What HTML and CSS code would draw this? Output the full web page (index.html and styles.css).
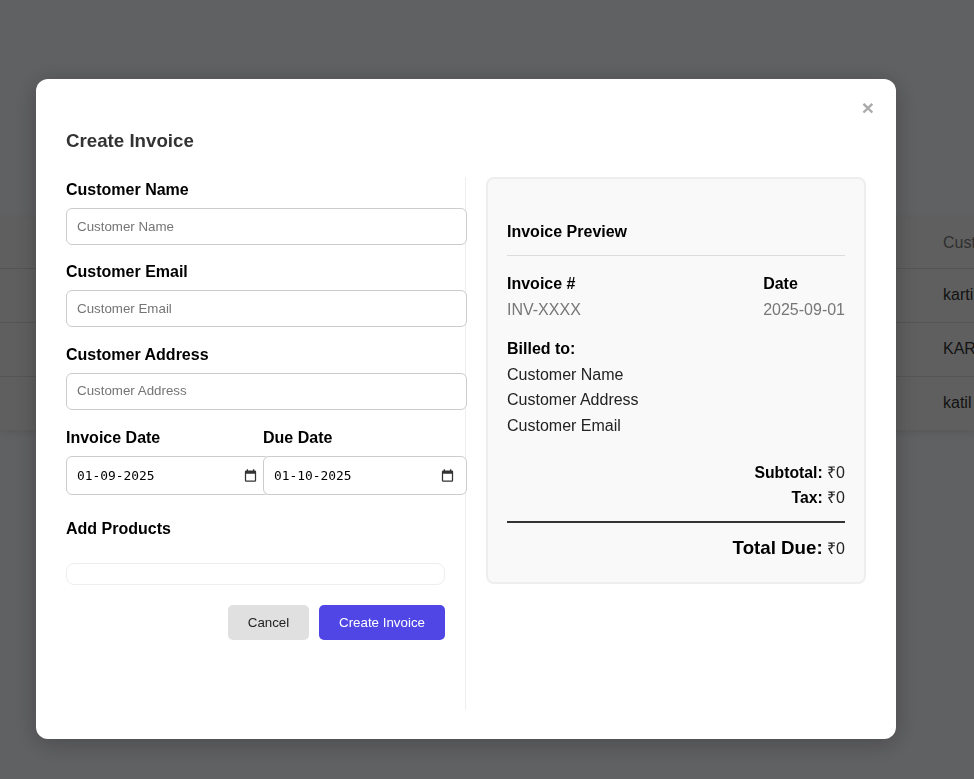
FILE: index.html
```html
<!doctype html>
<html lang="en">
<head>
    <meta charset="UTF-8">
    <meta name="viewport" content="width=device-width, initial-scale=1.0">
    <title>Create Invoice</title>
    <link rel="stylesheet" href="styles.css">
</head>
<body>

<div class="page">
    <table class="invoice-table">
        <tr class="head-row"><td>Cust</td></tr>
        <tr><td>karti</td></tr>
        <tr><td>KAR</td></tr>
        <tr><td>katil</td></tr>
    </table>
</div>

<div class="overlay">
    <div class="modal">
        <button class="close-btn" type="button">&times;</button>
        <h2 class="modal-title">Create Invoice</h2>
        <div class="modal-body">
            <form class="invoice-form">
                <label for="name">Customer Name</label>
                <input type="text" id="name" class="text-input" placeholder="Customer Name">
                <label for="email">Customer Email</label>
                <input type="text" id="email" class="text-input" placeholder="Customer Email">
                <label for="address">Customer Address</label>
                <input type="text" id="address" class="text-input" placeholder="Customer Address">
                <div class="date-row">
                    <div class="date-field">
                        <label for="invoice-date">Invoice Date</label>
                        <div class="date-input">
                            <input type="text" id="invoice-date" value="01-09-2025">
                            <svg viewBox="0 0 24 24" width="15" height="15"><path d="M19 4h-1V2h-2v2H8V2H6v2H5a2 2 0 0 0-2 2v14a2 2 0 0 0 2 2h14a2 2 0 0 0 2-2V6a2 2 0 0 0-2-2zm0 16H5V9h14v11z"/></svg>
                        </div>
                    </div>
                    <div class="date-field">
                        <label for="due-date">Due Date</label>
                        <div class="date-input">
                            <input type="text" id="due-date" value="01-10-2025">
                            <svg viewBox="0 0 24 24" width="15" height="15"><path d="M19 4h-1V2h-2v2H8V2H6v2H5a2 2 0 0 0-2 2v14a2 2 0 0 0 2 2h14a2 2 0 0 0 2-2V6a2 2 0 0 0-2-2zm0 16H5V9h14v11z"/></svg>
                        </div>
                    </div>
                </div>
                <h3 class="products-title">Add Products</h3>
                <div class="products-box"></div>
                <div class="form-actions">
                    <button type="button" class="btn btn-cancel">Cancel</button>
                    <button type="submit" class="btn btn-create">Create Invoice</button>
                </div>
            </form>
            <div class="preview-col">
                <div class="preview">
                    <h3 class="preview-title">Invoice Preview</h3>
                    <div class="preview-meta">
                        <div>
                            <div class="meta-label">Invoice #</div>
                            <div class="meta-value">INV-XXXX</div>
                        </div>
                        <div>
                            <div class="meta-label">Date</div>
                            <div class="meta-value">2025-09-01</div>
                        </div>
                    </div>
                    <div class="billed">
                        <div class="meta-label">Billed to:</div>
                        <div>Customer Name</div>
                        <div>Customer Address</div>
                        <div>Customer Email</div>
                    </div>
                    <div class="totals">
                        <div><strong>Subtotal:</strong> ₹0</div>
                        <div><strong>Tax:</strong> ₹0</div>
                        <div class="total-due"><strong>Total Due:</strong> ₹0</div>
                    </div>
                </div>
            </div>
        </div>
    </div>
</div>

</body>
</html>
```

FILE: styles.css
```css
* {
    box-sizing: border-box;
}

html,
body {
    height: 100%;
}

body {
    margin: 0;
    font-family: "Liberation Sans", Arial, sans-serif;
    background-color: #f0f2f6;
    overflow: hidden;
}

.page {
    padding-top: 218px;
}

.invoice-table {
    width: 100%;
    border-collapse: collapse;
    background-color: #eee;
    box-shadow: 0 2px 8px rgba(0, 0, 0, 0.1);
    font-size: 16px;
    color: #333;
}

.invoice-table td {
    height: 54px;
    padding-left: 943px;
    border-bottom: 1px solid #d5d5d5;
    white-space: nowrap;
}

.invoice-table tr:last-child td {
    border-bottom: none;
}

.invoice-table .head-row td {
    height: 50px;
    color: #777;
}

.overlay {
    position: fixed;
    top: 0;
    left: 0;
    right: 0;
    bottom: 0;
    padding: 79px 0 0 36px;
    background-color: rgba(0, 0, 0, 0.6);
}

.modal {
    position: relative;
    width: 860px;
    height: 660px;
    padding: 50px 30px 28px;
    background-color: #fff;
    border-radius: 12px;
    box-shadow: 0 4px 24px rgba(0, 0, 0, 0.25);
}

.close-btn {
    position: absolute;
    top: 16px;
    right: 22px;
    padding: 0;
    border: none;
    background: none;
    color: #aaa;
    font-family: inherit;
    font-size: 21px;
    font-weight: bold;
    line-height: 26px;
}

.modal-title {
    margin: 0 0 24px;
    font-size: 18.72px;
    line-height: 24px;
    color: #333;
}

.modal-body {
    display: flex;
    height: 533px;
}

.invoice-form {
    width: 400px;
    padding-right: 20px;
    border-right: 1px solid #eee;
}

label {
    display: block;
    font-size: 16px;
    font-weight: bold;
    line-height: 25px;
    margin-bottom: 6px;
    color: #000;
}

.text-input {
    display: block;
    width: 401px;
    height: 37px;
    padding: 0 10px 1px;
    margin-bottom: 14.4px;
    border: 1px solid #ccc;
    border-radius: 6px;
    font-family: inherit;
    font-size: 13.33px;
}

.text-input::placeholder {
    color: #757575;
}

.date-row {
    display: flex;
    width: 401px;
    padding-top: 0.8px;
}

.date-field {
    flex: 0 0 197px;
    min-width: 0;
}

.date-field:last-child {
    flex: 0 0 204px;
}

.date-input {
    display: flex;
    align-items: center;
    justify-content: space-between;
    width: 204px;
    height: 39px;
    padding: 0 11px 0 10px;
    background-color: #fff;
    border: 1px solid #ccc;
    border-radius: 6px;
}

.date-input input {
    width: 120px;
    padding: 0;
    border: none;
    outline: none;
    background: none;
    font-family: "DejaVu Sans Mono", monospace;
    font-size: 12.9px;
    color: #000;
}

.date-input svg {
    display: block;
    fill: #333;
}

.products-title {
    margin: 22px 0 22px;
    font-size: 16px;
    line-height: 24px;
    color: #000;
}

.products-box {
    width: 379px;
    height: 22px;
    border: 1px solid #eee;
    border-radius: 8px;
}

.form-actions {
    display: flex;
    justify-content: flex-end;
    gap: 10px;
    margin-top: 20px;
}

.btn {
    height: 35px;
    border: none;
    border-radius: 5px;
    font-family: inherit;
    font-size: 13.33px;
}

.btn-cancel {
    width: 81px;
    background-color: #e0e0e0;
    color: #222;
}

.btn-create {
    width: 126px;
    background-color: #4f46e5;
    color: #fff;
}

.preview-col {
    width: 400px;
    padding-left: 20px;
}

.preview {
    height: 407px;
    padding: 41px 19px 20px;
    background-color: #f9f9f9;
    border: 2px solid #eee;
    border-radius: 8px;
    font-size: 16px;
    line-height: 25.5px;
    color: #222;
}

.preview-title {
    margin: 0 0 15px;
    padding-bottom: 11px;
    border-bottom: 1px solid #ddd;
    font-size: 16px;
    line-height: 24px;
    color: #000;
}

.preview-meta {
    display: flex;
    justify-content: space-between;
}

.meta-label {
    font-weight: bold;
    color: #000;
}

.meta-value {
    color: #777;
}

.billed {
    margin-top: 14px;
}

.totals {
    margin-top: 21.5px;
    line-height: 25px;
    text-align: right;
}

.totals strong {
    font-size: 15.75px;
    color: #000;
}

.total-due {
    margin-top: 11px;
    padding-top: 12px;
    border-top: 2px solid #333;
}

.total-due strong {
    font-size: 18.72px;
}
```
